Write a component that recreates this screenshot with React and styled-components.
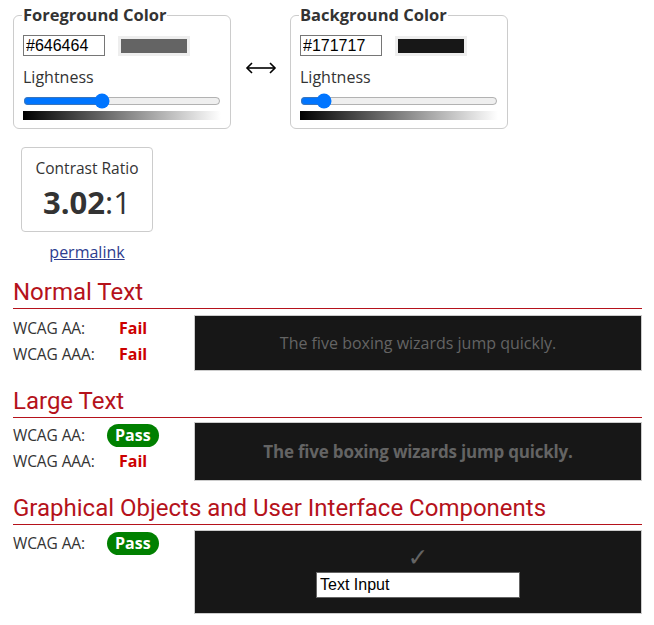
import React from 'react';
import styled, { createGlobalStyle } from 'styled-components';

const GlobalStyle = createGlobalStyle`
  html, body {
    margin: 0;
    padding: 0;
    background: #fff;
  }
  body {
    font-family: "Open Sans", "Liberation Sans", sans-serif;
    color: #333;
  }
`;

function ColorPicker({ title, hex, lightness }) {
  return (
    <Fieldset>
      <Legend>{title}</Legend>
      <InputRow>
        <HexInput type="text" defaultValue={hex} />
        <Swatch>
          <SwatchFill style={{ background: hex }} />
        </Swatch>
      </InputRow>
      <SliderLabel>Lightness</SliderLabel>
      <Slider type="range" min="0" max="100" defaultValue={lightness} />
      <Gradient />
    </Fieldset>
  );
}

function Result({ label, pass }) {
  return (
    <ResultRow>
      <ResultLabel>{label}</ResultLabel>
      {pass ? <PassBadge>Pass</PassBadge> : <FailText>Fail</FailText>}
    </ResultRow>
  );
}

export default function App() {
  return (
    <Page>
      <GlobalStyle />
      <Pickers>
        <ColorPicker title="Foreground Color" hex="#646464" lightness={39} />
        <Swap aria-label="swap colors">
          <svg width="32" height="14" viewBox="0 0 32 14" fill="none" stroke="#000" strokeWidth="1.6">
            <path d="M2 7 H30" />
            <path d="M7 2 L2 7 L7 12" />
            <path d="M25 2 L30 7 L25 12" />
          </svg>
        </Swap>
        <ColorPicker title="Background Color" hex="#171717" lightness={9} />
      </Pickers>

      <RatioBox>
        <RatioLabel>Contrast Ratio</RatioLabel>
        <RatioValue>
          <b>3.02</b>:1
        </RatioValue>
      </RatioBox>
      <Permalink href="#">permalink</Permalink>

      <Section gap={15}>
        <Heading>Normal Text</Heading>
        <SectionBody top={6}>
          <Results>
            <Result label="WCAG AA:" />
            <Result label="WCAG AAA:" />
          </Results>
          <Demo height={56}>
            <DemoText>The five boxing wizards jump quickly.</DemoText>
          </Demo>
        </SectionBody>
      </Section>

      <Section gap={16}>
        <Heading>Large Text</Heading>
        <SectionBody top={4}>
          <Results>
            <Result label="WCAG AA:" pass />
            <Result label="WCAG AAA:" />
          </Results>
          <Demo height={59}>
            <DemoText large>The five boxing wizards jump quickly.</DemoText>
          </Demo>
        </SectionBody>
      </Section>

      <Section gap={13}>
        <Heading>Graphical Objects and User Interface Components</Heading>
        <SectionBody top={5}>
          <Results>
            <Result label="WCAG AA:" pass />
          </Results>
          <Demo height={84} column>
            <Check>&#10003;</Check>
            <DemoInput type="text" defaultValue="Text Input" />
          </Demo>
        </SectionBody>
      </Section>
    </Page>
  );
}

const Page = styled.div`
  width: 654px;
  padding: 0 12px 0 13px;
  box-sizing: border-box;
`;

const Pickers = styled.div`
  display: flex;
  align-items: flex-start;
`;

const Fieldset = styled.fieldset`
  width: 218px;
  box-sizing: border-box;
  margin: 4px 0 0;
  padding: 9px 9px 8px;
  border: 1px solid #ccc;
  border-radius: 6px;
`;

const Legend = styled.legend`
  padding: 0 1px;
  margin-left: -1px;
  font-weight: 700;
  font-size: 16.5px;
  line-height: 22px;
  color: #333;
`;

const InputRow = styled.div`
  display: flex;
  align-items: center;
  gap: 13px;
`;

const HexInput = styled.input`
  width: 82px;
  height: 21px;
  box-sizing: border-box;
  padding: 0 2px;
  border: 1px solid #767676;
  font-family: "Liberation Sans", Arial, sans-serif;
  font-size: 16px;
  color: #000;
`;

const Swatch = styled.div`
  width: 72px;
  height: 20px;
  padding: 3px;
  box-sizing: border-box;
  background: #eee;
`;

const SwatchFill = styled.div`
  width: 100%;
  height: 100%;
`;

const SliderLabel = styled.div`
  margin-top: 10px;
  font-size: 16px;
  line-height: 22px;
  color: #333;
`;

const Slider = styled.input`
  display: block;
  width: 198px;
  margin: 5px 0 0;
  height: 16px;
`;

const Gradient = styled.div`
  width: 198px;
  height: 9px;
  margin-top: 2px;
  background: linear-gradient(to right, #000, #fff);
`;

const Swap = styled.div`
  width: 59px;
  height: 14px;
  margin-top: 61px;
  display: flex;
  justify-content: center;
`;

const RatioBox = styled.div`
  width: 132px;
  height: 85px;
  box-sizing: border-box;
  margin: 18px 0 0 8px;
  border: 1px solid #ccc;
  border-radius: 4px;
  text-align: center;
  padding-top: 9px;
`;

const RatioLabel = styled.div`
  font-size: 15.5px;
  line-height: 22px;
  color: #333;
`;

const RatioValue = styled.div`
  margin-top: 3px;
  font-size: 31px;
  line-height: 40px;
  color: #333;

  b {
    font-weight: 700;
  }
`;

const Permalink = styled.a`
  display: block;
  width: 132px;
  margin: 9px 0 0 8px;
  text-align: center;
  font-size: 16px;
  line-height: 22px;
  color: #2e3d8f;
  text-decoration: underline;
`;

const Section = styled.section`
  margin-top: ${(p) => p.gap}px;
`;

const Heading = styled.h2`
  margin: 0;
  padding-bottom: 2px;
  border-bottom: 1px solid #b5121b;
  font-family: Roboto, "Liberation Sans", sans-serif;
  font-weight: 400;
  font-size: 24px;
  line-height: 28px;
  color: #b5121b;
`;

const SectionBody = styled.div`
  display: flex;
  align-items: flex-start;
  margin-top: ${(p) => p.top}px;
`;

const Results = styled.div`
  width: 181px;
  display: flex;
  flex-direction: column;
`;

const ResultRow = styled.div`
  display: flex;
  align-items: center;
  height: 26px;
`;

const ResultLabel = styled.span`
  width: 106px;
  font-size: 15.5px;
  color: #333;
  letter-spacing: -0.1px;
`;

const FailText = styled.span`
  font-weight: 700;
  font-size: 16px;
  color: #c00;
`;

const PassBadge = styled.span`
  margin-left: -12px;
  padding: 0 8px;
  border-radius: 12px;
  background: #008000;
  color: #fff;
  font-weight: 700;
  font-size: 16px;
  line-height: 23px;
`;

const Demo = styled.div`
  flex: 1;
  height: ${(p) => p.height}px;
  box-sizing: border-box;
  border: 1px solid #ccc;
  background: #171717;
  display: flex;
  flex-direction: ${(p) => (p.column ? 'column' : 'row')};
  align-items: center;
  justify-content: center;
`;

const DemoText = styled.p`
  margin: 0;
  font-size: ${(p) => (p.large ? '17px' : '16px')};
  font-weight: ${(p) => (p.large ? 700 : 400)};
  color: #646464;
  letter-spacing: ${(p) => (p.large ? '-0.2px' : '0')};
`;

const Check = styled.span`
  font-family: "DejaVu Sans", sans-serif;
  font-size: 25px;
  line-height: 24px;
  color: #646464;
`;

const DemoInput = styled.input`
  margin-top: 2px;
  width: 204px;
  height: 26px;
  box-sizing: border-box;
  border: 1px solid #646464;
  padding: 0 3px;
  font-family: "Liberation Sans", Arial, sans-serif;
  font-size: 16px;
  color: #000;
`;
